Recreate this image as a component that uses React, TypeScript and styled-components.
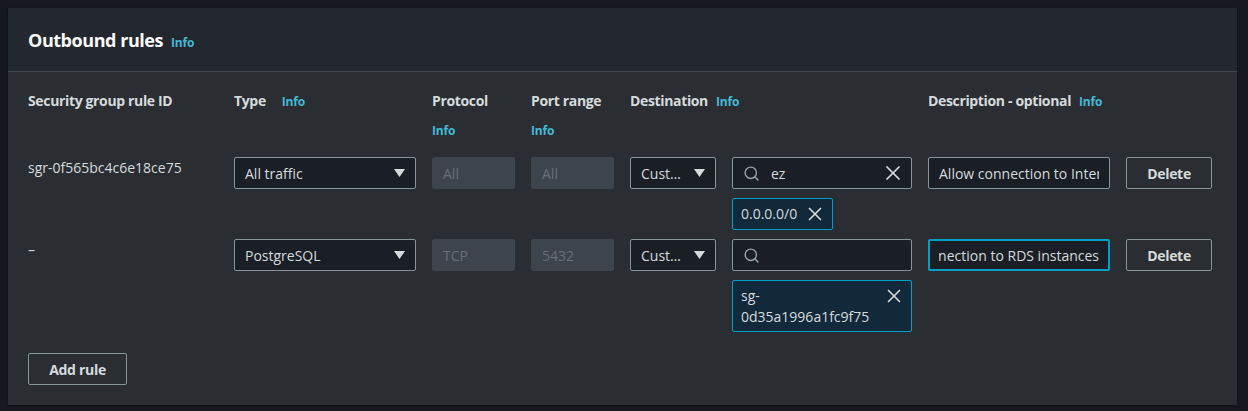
import React from 'react';
import styled, { createGlobalStyle } from 'styled-components';
import { Search, X } from 'lucide-react';

const GlobalStyle = createGlobalStyle`
  body {
    margin: 0;
    background: #16191f;
    font-family: 'Open Sans', 'Noto Sans', Arial, sans-serif;
    color: #d5dbdb;
  }
`;

const Page = styled.div`
  padding: 8px 11px 8px 8px;
`;

const Card = styled.section`
  background: #2a2e33;
  box-shadow: 0 1px 2px rgba(0, 0, 0, 0.5);
`;

const Header = styled.header`
  height: 64px;
  box-sizing: border-box;
  padding: 19px 20px 0;
  display: flex;
  align-items: baseline;
  gap: 8px;
  background: #23272e;
  border-bottom: 1px solid #414750;
`;

const Title = styled.h2`
  margin: 0;
  font-size: 18px;
  line-height: 26px;
  font-weight: 700;
  color: #fafafa;
  letter-spacing: -0.45px;
`;

const InfoLink = styled.a`
  font-size: 12px;
  font-weight: 700;
  color: #44b9d6;
  text-decoration: none;
  line-height: 20px;
  letter-spacing: -0.2px;
`;

const Body = styled.div`
  padding: 19px 20px 20px;
`;

const Grid = styled.div`
  display: grid;
  grid-template-columns: 190px 182px 83px 83px 86px 180px 182px 86px;
  column-gap: 16px;
  align-items: start;
`;

const HeadCell = styled.div<{ $span?: number; $infoGap?: number }>`
  grid-column: span ${(p) => p.$span ?? 1};
  display: flex;
  flex-wrap: wrap;
  align-items: baseline;
  column-gap: ${(p) => p.$infoGap ?? 8}px;
  row-gap: 10px;
  font-size: 14px;
  font-weight: 700;
  line-height: 20px;
  letter-spacing: -0.35px;
  color: #d5dbdb;
  margin-bottom: 16px;
`;

const IdCell = styled.div`
  font-size: 14px;
  line-height: 20px;
  padding-top: 1px;
`;

const Stack = styled.div`
  grid-column: span 2;
  display: flex;
  gap: 16px;
  align-items: flex-start;
`;

const Field = styled.div<{ $width?: number; $focused?: boolean; $disabled?: boolean }>`
  width: ${(p) => (p.$width ? `${p.$width}px` : '100%')};
  height: 32px;
  box-sizing: border-box;
  display: flex;
  align-items: center;
  padding: 0 ${(p) => (p.$focused ? 9 : 10)}px;
  border-radius: 2px;
  border: ${(p) =>
    p.$focused ? '2px solid #00a1c9' : p.$disabled ? '1px solid #3e444c' : '1px solid #879596'};
  background: ${(p) => (p.$disabled ? '#3e444c' : '#1a1f26')};
  color: ${(p) => (p.$disabled ? '#687078' : '#d5dbdb')};
  font-size: 14px;
  overflow: hidden;
  white-space: nowrap;
`;

const SelectText = styled.span`
  flex: 1;
  min-width: 0;
  overflow: hidden;
  text-overflow: ellipsis;
  margin-right: 10px;
`;

const ScrolledText = styled.div<{ $end?: boolean }>`
  flex: 1;
  display: flex;
  justify-content: ${(p) => (p.$end ? 'flex-end' : 'flex-start')};
  overflow: hidden;
  white-space: nowrap;
`;

const DestinationCol = styled.div`
  display: flex;
  flex-direction: column;
  gap: 9px;
  width: 180px;
`;

const SearchText = styled.span`
  flex: 1;
  margin-left: 11px;
`;

const Token = styled.div<{ $width?: number }>`
  width: ${(p) => (p.$width ? `${p.$width}px` : '100%')};
  box-sizing: border-box;
  display: flex;
  align-items: flex-start;
  justify-content: space-between;
  gap: 6px;
  padding: 4px 8px;
  border: 1px solid #00a1c9;
  border-radius: 2px;
  background: #12293b;
  font-size: 14px;
  line-height: 21px;
  color: #d5dbdb;
`;

const TokenLabel = styled.span`
  flex: 1;
  white-space: normal;
`;

const Button = styled.button<{ $width: number }>`
  width: ${(p) => p.$width}px;
  height: 32px;
  padding: 0;
  background: transparent;
  border: 1px solid #879596;
  border-radius: 2px;
  color: #d5dbdb;
  font-family: inherit;
  font-size: 14px;
  font-weight: 700;
  letter-spacing: -0.3px;
  cursor: pointer;
`;

const RowGap = styled.div`
  grid-column: 1 / -1;
  height: 9px;
`;

const Footer = styled.div`
  margin-top: 21px;
`;

const Caret = () => (
  <svg width="11" height="8" viewBox="0 0 11 8" aria-hidden style={{ flexShrink: 0 }}>
    <path d="M0 0 H11 L5.5 8 Z" fill="#d5dbdb" />
  </svg>
);

const CloseIcon = styled(X)`
  flex-shrink: 0;
  color: #d5dbdb;
`;

const SearchIcon = styled(Search)`
  flex-shrink: 0;
  color: #95a5a6;
`;

type Rule = {
  id: string;
  type: string;
  protocol: string;
  port: string;
  search: string;
  token: string;
  tokenWidth?: number;
  description: string;
  focused?: boolean;
};

const rules: Rule[] = [
  {
    id: 'sgr-0f565bc4c6e18ce75',
    type: 'All traffic',
    protocol: 'All',
    port: 'All',
    search: 'ez',
    token: '0.0.0.0/0',
    tokenWidth: 101,
    description: 'Allow connection to Internet',
  },
  {
    id: '–',
    type: 'PostgreSQL',
    protocol: 'TCP',
    port: '5432',
    search: '',
    token: 'sg-0d35a1996a1fc9f75',
    description: 'Allow connection to RDS instances',
    focused: true,
  },
];

const RuleRow: React.FC<{ rule: Rule }> = ({ rule }) => (
  <>
    <IdCell>{rule.id}</IdCell>
    <Field>
      <SelectText>{rule.type}</SelectText>
      <Caret />
    </Field>
    <Field $disabled>{rule.protocol}</Field>
    <Field $disabled>{rule.port}</Field>
    <Stack>
      <Field $width={86}>
        <SelectText>Custom</SelectText>
        <Caret />
      </Field>
      <DestinationCol>
        <Field>
          <SearchIcon size={17} strokeWidth={2} />
          <SearchText>{rule.search}</SearchText>
          {rule.search && <CloseIcon size={24} strokeWidth={1.7} style={{ marginRight: -4 }} />}
        </Field>
        <Token $width={rule.tokenWidth}>
          <TokenLabel>{rule.token}</TokenLabel>
          <CloseIcon size={22} strokeWidth={1.8} style={{ marginRight: -2 }} />
        </Token>
      </DestinationCol>
    </Stack>
    <Field $focused={rule.focused}>
      <ScrolledText $end={rule.focused}>{rule.description}</ScrolledText>
    </Field>
    <Button $width={86}>Delete</Button>
  </>
);

export default function App() {
  return (
    <>
      <GlobalStyle />
      <Page>
        <Card>
          <Header>
            <Title>Outbound rules</Title>
            <InfoLink>Info</InfoLink>
          </Header>
          <Body>
            <Grid>
              <HeadCell>Security group rule ID</HeadCell>
              <HeadCell $infoGap={16}>
                Type <InfoLink>Info</InfoLink>
              </HeadCell>
              <HeadCell>
                Protocol <InfoLink>Info</InfoLink>
              </HeadCell>
              <HeadCell>
                Port range <InfoLink>Info</InfoLink>
              </HeadCell>
              <HeadCell $span={2}>
                Destination <InfoLink>Info</InfoLink>
              </HeadCell>
              <HeadCell $span={2}>
                Description - optional <InfoLink>Info</InfoLink>
              </HeadCell>
              <RuleRow rule={rules[0]} />
              <RowGap />
              <RuleRow rule={rules[1]} />
            </Grid>
            <Footer>
              <Button $width={99}>Add rule</Button>
            </Footer>
          </Body>
        </Card>
      </Page>
    </>
  );
}
